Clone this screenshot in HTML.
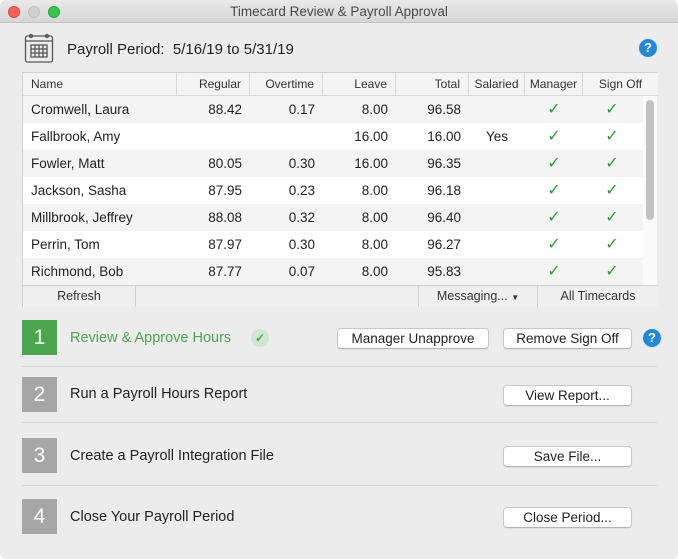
<!DOCTYPE html><html><head><style>
*{box-sizing:border-box;margin:0;padding:0}
body{width:678px;height:559px;background:#fff;font-family:"Liberation Sans",sans-serif;color:#222;position:relative;overflow:hidden}
.win{position:absolute;left:0;top:0;width:678px;height:559px;background:#ececec;border-radius:6px;overflow:hidden}
.tb{position:absolute;left:0;top:0;width:678px;height:23px;background:linear-gradient(#e9e9e9,#d6d6d6);border-bottom:1px solid #c4c4c4;text-align:center;font-size:13.5px;line-height:23px;color:#4a4a4a}
.dot{position:absolute;top:6px;width:12px;height:12px;border-radius:50%}
.a{position:absolute}
.tbl{position:absolute;left:22px;top:72px;width:635px;height:235px;border:1px solid #d0d0d0;background:#fff}
.hd{position:absolute;top:0;height:23px;font-size:12px;line-height:23px;color:#333;border-right:1px solid #d8d8d8;border-bottom:1px solid #d8d8d8;background:#f4f4f4}
.row{position:absolute;left:0;width:620px;height:27px;font-size:13.5px;line-height:27px}
.row span{position:absolute}
.r{text-align:right}
.ck{color:#2f9a3a;font-size:16px}
.ft{position:absolute;top:212px;height:22px;font-size:12.5px;line-height:21px;text-align:center;border-top:1px solid #d0d0d0;border-right:1px solid #d0d0d0;background:#efefef;color:#333}
.btn{position:absolute;height:21px;background:#fff;border:1px solid #c8c8c8;border-bottom-color:#b5b5b5;border-radius:4px;font-size:13.5px;line-height:19px;text-align:center;color:#222;box-shadow:0 1px 1px rgba(0,0,0,.06)}
.step{position:absolute;left:22px;width:35px;height:35px;background:#a6a6a6;color:#fff;font-size:21px;line-height:35px;text-align:center}
.lbl{position:absolute;left:70px;font-size:14.5px;color:#222}
.sep{position:absolute;left:22px;width:635px;height:1px;background:#d6d6d6}
.help{position:absolute;width:18px;height:18px;border-radius:50%;background:#1e88e5;color:#fff;font-weight:bold;font-size:13px;line-height:18px;text-align:center}
</style></head><body><div class="win">
<div class="tb">Timecard Review &amp; Payroll Approval
<div class="dot" style="left:8px;background:#fc5f57;border:1px solid #e0443e"></div>
<div class="dot" style="left:28px;background:#d0d0d0;border:1px solid #c0c0c0"></div>
<div class="dot" style="left:48px;background:#34c84a;border:1px solid #24a93a"></div></div>
<svg class="a" style="left:24px;top:32px" width="30" height="32" viewBox="0 0 30 32" fill="none" stroke="#555" stroke-width="1.3"><rect x="1.5" y="4" width="27" height="26" rx="2"/><line x1="1.5" y1="9" x2="28.5" y2="9"/><circle cx="7" cy="4" r="1.5"/><circle cx="23" cy="4" r="1.5"/><rect x="7" y="13" width="16" height="12"/><line x1="7" y1="17" x2="23" y2="17"/><line x1="7" y1="21" x2="23" y2="21"/><line x1="11" y1="13" x2="11" y2="25"/><line x1="15" y1="13" x2="15" y2="25"/><line x1="19" y1="13" x2="19" y2="25"/></svg>
<div class="a" style="left:67px;top:41px;font-size:15px">Payroll Period:&nbsp; 5/16/19 to 5/31/19</div>
<div class="help" style="left:639px;top:39px">?</div>
<div class="tbl">
<div class="hd" style="left:0;width:154px;padding-left:8px">Name</div>
<div class="hd r" style="left:154px;width:73px;padding-right:8px">Regular</div>
<div class="hd r" style="left:227px;width:73px;padding-right:8px">Overtime</div>
<div class="hd r" style="left:300px;width:73px;padding-right:8px">Leave</div>
<div class="hd r" style="left:373px;width:73px;padding-right:8px">Total</div>
<div class="hd" style="left:446px;width:56px;text-align:center">Salaried</div>
<div class="hd" style="left:502px;width:58px;text-align:center">Manager</div>
<div class="hd" style="left:560px;width:75px;text-align:center;border-right:none">Sign Off</div>
<div class="a" style="left:619px;top:23px;width:15px;height:189px;background:#fafafa;border-left:1px solid #e6e6e6"><div style="margin:4px 0 0 3px;width:8px;height:120px;border-radius:4px;background:#c2c2c2"></div></div>
<div id="rows"></div>
<div class="ft" style="left:0;width:113px">Refresh</div>
<div class="ft" style="left:113px;width:283px"></div>
<div class="ft" style="left:396px;width:119px">Messaging... <span style="font-size:8px">▼</span></div>
<div class="ft" style="left:515px;width:120px;border-right:none">All Timecards</div>
</div>
<div class="step" style="top:320px;background:#4aa74d">1</div>
<div class="lbl" style="top:330px;color:#4aa74d">Review &amp; Approve Hours</div>
<div class="a" style="left:251px;top:329px;width:18px;height:18px;border-radius:50%;background:#cfe6cf;color:#4aa74d;font-size:12px;line-height:18px;text-align:center;font-weight:bold">✓</div>
<div class="btn" style="left:337px;top:328px;width:152px">Manager Unapprove</div>
<div class="btn" style="left:503px;top:328px;width:129px">Remove Sign Off</div>
<div class="help" style="left:643px;top:329px">?</div>
<div class="sep" style="top:366px"></div>
<div class="step" style="top:377px">2</div>
<div class="lbl" style="top:386px">Run a Payroll Hours Report</div>
<div class="btn" style="left:503px;top:385px;width:129px">View Report...</div>
<div class="sep" style="top:422px"></div>
<div class="step" style="top:438px">3</div>
<div class="lbl" style="top:448px">Create a Payroll Integration File</div>
<div class="btn" style="left:503px;top:446px;width:129px">Save File...</div>
<div class="sep" style="top:485px"></div>
<div class="step" style="top:499px">4</div>
<div class="lbl" style="top:509px">Close Your Payroll Period</div>
<div class="btn" style="left:503px;top:507px;width:129px">Close Period...</div>
</div>
<script>
var d=[["Cromwell, Laura","88.42","0.17","8.00","96.58",""],["Fallbrook, Amy","","","16.00","16.00","Yes"],["Fowler, Matt","80.05","0.30","16.00","96.35",""],["Jackson, Sasha","87.95","0.23","8.00","96.18",""],["Millbrook, Jeffrey","88.08","0.32","8.00","96.40",""],["Perrin, Tom","87.97","0.30","8.00","96.27",""],["Richmond, Bob","87.77","0.07","8.00","95.83",""]];
var h="";d.forEach(function(r,i){h+='<div class="row" style="top:'+(23+i*27)+'px;background:'+(i%2?'#fff':'#f4f4f4')+'"><span style="left:8px">'+r[0]+'</span><span class="r" style="left:154px;width:65px">'+r[1]+'</span><span class="r" style="left:227px;width:65px">'+r[2]+'</span><span class="r" style="left:300px;width:65px">'+r[3]+'</span><span class="r" style="left:373px;width:65px">'+r[4]+'</span><span style="left:446px;width:56px;text-align:center">'+r[5]+'</span><span class="ck" style="left:502px;width:58px;text-align:center">✓</span><span class="ck" style="left:560px;width:58px;text-align:center">✓</span></div>';});
document.getElementById("rows").outerHTML=h;
</script>
</body></html>
